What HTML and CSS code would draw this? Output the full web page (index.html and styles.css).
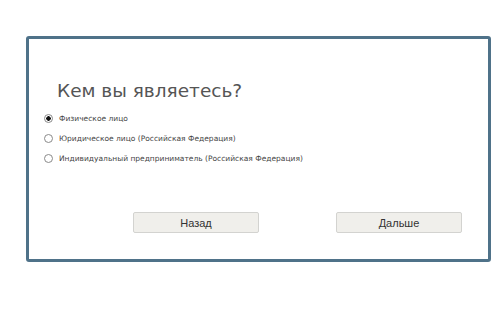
FILE: index.html
```html
<!DOCTYPE html>
<html>
<head>
  <meta charset="utf-8">
  <title>Кем вы являетесь?</title>
  <link rel="stylesheet" href="styles.css">
</head>
<body>
  <div class="dialog">
    <h1>Кем вы являетесь?</h1>

    <div class="options">
      <label class="option">
        <input type="radio" name="kind" value="person" checked>
        <span>Физическое лицо</span>
      </label>
      <label class="option">
        <input type="radio" name="kind" value="company">
        <span>Юридическое лицо (Российская Федерация)</span>
      </label>
      <label class="option">
        <input type="radio" name="kind" value="ip">
        <span>Индивидуальный предприниматель (Российская Федерация)</span>
      </label>
    </div>

    <div class="actions">
      <button class="btn">Назад</button>
      <button class="btn">Дальше</button>
    </div>
  </div>
</body>
</html>
```

FILE: styles.css
```css
body {
  margin: 0;
  padding: 36px 0 0 26px;
  background: #fff;
  font-family: "DejaVu Sans", Verdana, sans-serif;
}
.dialog {
  width: 459px;
  height: 220px;
  border: 3px solid #4f7289;
  border-radius: 3px;
  box-sizing: content-box;
  background: #fff;
}
h1 {
  margin: 40px 0 0 28px;
  font-size: 18.5px;
  font-weight: normal;
  color: #555;
  line-height: 24px;
}
.options {
  margin: 10px 0 0 15px;
  display: flex;
  flex-direction: column;
  gap: 9px;
}
.option {
  display: flex;
  align-items: center;
  font-size: 7.5px;
  color: #444;
  line-height: 11px;
}
.option input {
  appearance: none;
  margin: 0 6px 0 0;
  width: 9px;
  height: 9px;
  border: 1px solid #8a8a8a;
  border-radius: 50%;
  background: #fff;
  box-sizing: border-box;
}
.option input:checked {
  background: radial-gradient(circle, #111 0 2px, #fff 2.5px);
}
.actions {
  display: flex;
  justify-content: space-between;
  margin: 48px 0 0 104px;
  width: 329px;
}
.btn {
  width: 126px;
  height: 21px;
  background: #f0efeb;
  border: 1px solid #d3d3d0;
  border-radius: 2px;
  font-family: "Liberation Sans", Arial, sans-serif;
  font-size: 11px;
  color: #333;
  padding: 0;
}
```
